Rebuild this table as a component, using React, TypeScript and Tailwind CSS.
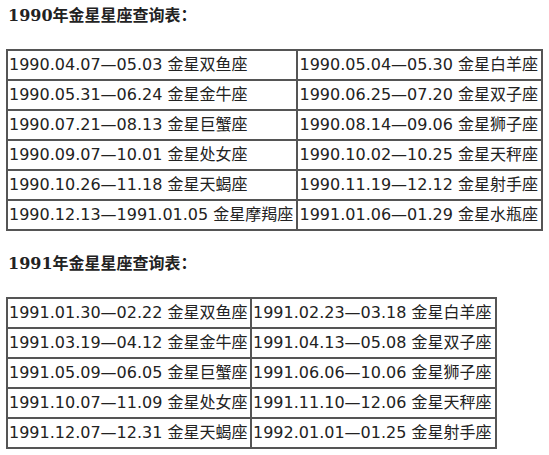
import React from 'react';

const table1990 = [
  ['1990.04.07—05.03 金星双鱼座', '1990.05.04—05.30 金星白羊座'],
  ['1990.05.31—06.24 金星金牛座', '1990.06.25—07.20 金星双子座'],
  ['1990.07.21—08.13 金星巨蟹座', '1990.08.14—09.06 金星狮子座'],
  ['1990.09.07—10.01 金星处女座', '1990.10.02—10.25 金星天秤座'],
  ['1990.10.26—11.18 金星天蝎座', '1990.11.19—12.12 金星射手座'],
  ['1990.12.13—1991.01.05 金星摩羯座', '1991.01.06—01.29 金星水瓶座'],
];

const table1991 = [
  ['1991.01.30—02.22 金星双鱼座', '1991.02.23—03.18 金星白羊座'],
  ['1991.03.19—04.12 金星金牛座', '1991.04.13—05.08 金星双子座'],
  ['1991.05.09—06.05 金星巨蟹座', '1991.06.06—10.06 金星狮子座'],
  ['1991.10.07—11.09 金星处女座', '1991.11.10—12.06 金星天秤座'],
  ['1991.12.07—12.31 金星天蝎座', '1992.01.01—01.25 金星射手座'],
];

const headingFont = { fontFamily: '"DejaVu Serif", "Noto Sans CJK SC", serif' };
const cellFont = { fontFamily: '"DejaVu Sans", "Noto Sans CJK SC", sans-serif' };

const VenusTable = ({ rows, widths }: { rows: string[][]; widths: string[] }) => (
  <table className="border-collapse border-2 border-[#555] text-[16px] text-[#222]" style={cellFont}>
    <tbody>
      {rows.map((row, i) => (
        <tr key={i}>
          {row.map((cell, j) => (
            <td
              key={j}
              className={`${widths[j]} h-[30px] border-2 border-[#555] px-px py-0 whitespace-nowrap leading-[26px]`}
            >
              {cell}
            </td>
          ))}
        </tr>
      ))}
    </tbody>
  </table>
);

const App = () => {
  return (
    <div className="bg-white px-[6px] pt-[4px] w-[549px] h-[455px]">
      <h2 className="pl-[2px] text-[16px] font-bold leading-6 text-[#222]" style={headingFont}>
        1990年金星星座查询表：
      </h2>
      <div className="mt-[21px]">
        <VenusTable rows={table1990} widths={['w-[291px]', 'w-[245px]']} />
      </div>
      <h2 className="mt-[21px] pl-[2px] text-[16px] font-bold leading-6 text-[#222]" style={headingFont}>
        1991年金星星座查询表：
      </h2>
      <div className="mt-[21px]">
        <VenusTable rows={table1991} widths={['w-[244px]', 'w-[245px]']} />
      </div>
    </div>
  );
};

export default App;
